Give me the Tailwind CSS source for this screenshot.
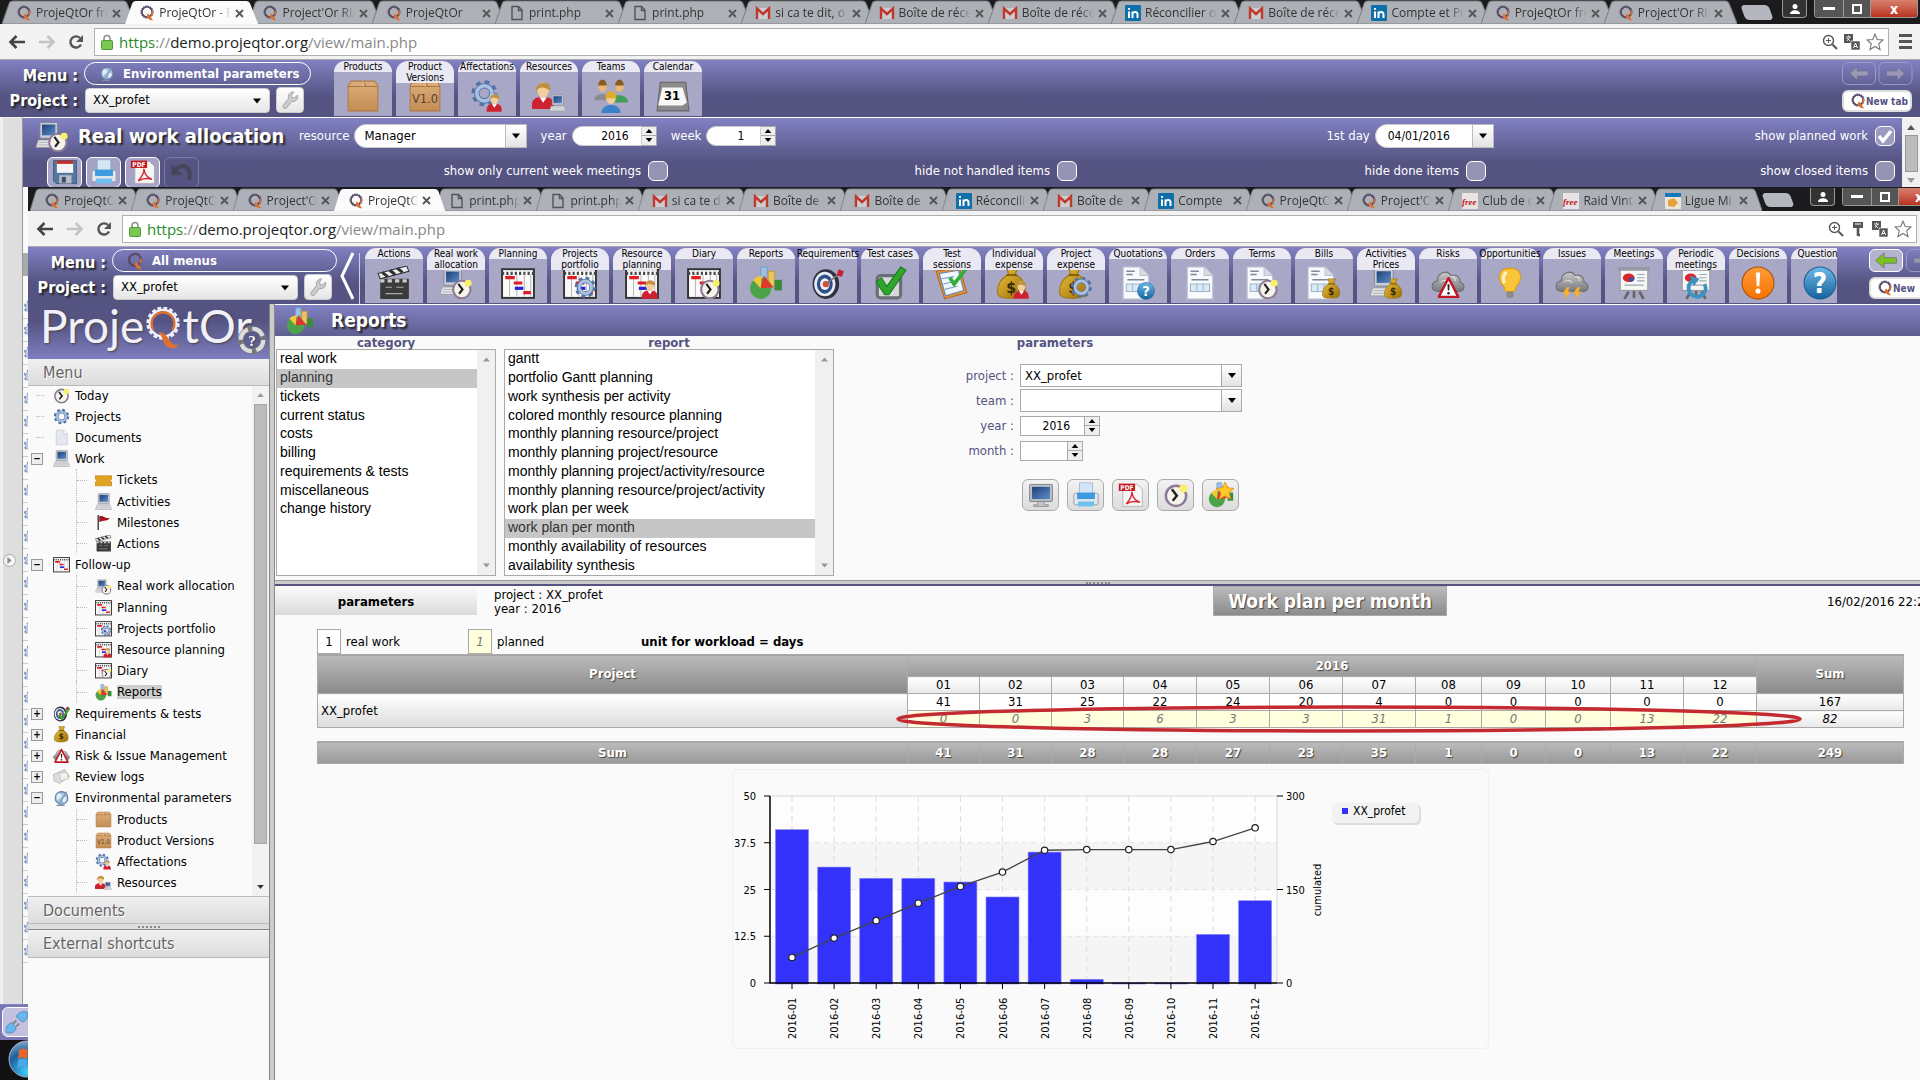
<!DOCTYPE html>
<html lang="en">
<head>
<meta charset="utf-8">
<title>ProjeQtOr - Reports</title>
<script src="https://cdn.jsdelivr.net/npm/@tailwindcss/browser@4"></script>
</head>
<body class="bg-[#fafafa] text-black text-[13px] font-['DejaVu_Sans_Condensed','DejaVu_Sans',sans-serif]">

<!-- Gradients shared by the icons -->
<svg class="absolute size-0" xmlns="http://www.w3.org/2000/svg">
  <defs>
    <linearGradient id="gBox" x1="0" y1="0" x2="0" y2="1"><stop offset="0" stop-color="#dcae7c"/><stop offset="1" stop-color="#c58d52"/></linearGradient>
    <linearGradient id="gBlue" x1="0" y1="0" x2="0" y2="1"><stop offset="0" stop-color="#6db9e6"/><stop offset="1" stop-color="#15629f"/></linearGradient>
    <linearGradient id="gOrange" x1="0" y1="0" x2="0" y2="1"><stop offset="0" stop-color="#ff9c3a"/><stop offset="1" stop-color="#f57200"/></linearGradient>
    <linearGradient id="gScreen" x1="0" y1="0" x2="1" y2="1"><stop offset="0" stop-color="#1d4078"/><stop offset="1" stop-color="#5d8cc8"/></linearGradient>
    <linearGradient id="gCloud" x1="0" y1="0" x2="0" y2="1"><stop offset="0" stop-color="#c9c9cb"/><stop offset="1" stop-color="#77787c"/></linearGradient>
    <linearGradient id="gGold" x1="0" y1="0" x2="1" y2="1"><stop offset="0" stop-color="#ecc23e"/><stop offset="1" stop-color="#9c6f08"/></linearGradient>
    <radialGradient id="gOrb" cx=".5" cy=".85" r=".9"><stop offset="0" stop-color="#3fd0f5"/><stop offset=".6" stop-color="#1a5f9c"/><stop offset="1" stop-color="#8fb4cc"/></radialGradient>
  </defs>
</svg>
<!-- Icon library -->
<svg class="hidden" xmlns="http://www.w3.org/2000/svg">
  <symbol id="q" viewBox="0 0 16 16"><circle cx="8" cy="7" r="5.4" fill="none" stroke="#4d4668" stroke-width="2.2" stroke-dasharray="1.5 .6"/><circle cx="8" cy="7" r="5" fill="none" stroke="#5b4a5e" stroke-width="1.2"/><path d="M8.500 9l4 5.500c-2.500 0-3-1.500-4.500-4M12.700 10a5.800 5.800 0 0 0 .4-4" fill="none" stroke="#e0702c" stroke-width="1.600"/></symbol>
  <symbol id="page" viewBox="0 0 16 16"><path d="M3 1.500h6.500l3.500 3.500v9.500h-10zM9.500 1.500v4h3.500" fill="none" stroke="#505458" stroke-width="1.400"/></symbol>
  <symbol id="gmail" viewBox="0 0 16 16"><path d="M1 3h14v11H1z" fill="#dfe0e2" opacity=".6"/><path d="M2 14V3.500l6 5.500 6-5.500V14" fill="none" stroke="#c0372c" stroke-width="2.400"/></symbol>
  <symbol id="in" viewBox="0 0 16 16"><rect width="16" height="16" rx="1" fill="#0f6fa8"/><path d="M4 6.500V13M4 3v1.800M7.500 13V6.500M7.500 9c.5-2.500 5-2.800 5 .5V13" stroke="#fff" stroke-width="2" fill="none"/></symbol>
  <symbol id="free" viewBox="0 0 16 16"><rect width="16" height="16" fill="#e8e4e4"/><text x="0" y="12" font-size="9" font-weight="bold" font-style="italic" font-family="Liberation Serif" fill="#c51414">free</text></symbol>
  <symbol id="ligue" viewBox="0 0 16 16"><rect width="16" height="16" fill="#ece6d8"/><rect width="16" height="4" fill="#1779b8"/><path d="M3 7l6-2 4 5-4 4-6-1z" fill="#e2a23c"/></symbol>
  <symbol id="lock" viewBox="0 0 12 16"><path d="M3 7V4.500a3 3 0 0 1 6 0V7" fill="none" stroke="#8b9488" stroke-width="1.600"/><rect x=".5" y="6.500" width="11" height="9" rx="1" fill="#7cc653" stroke="#4d9a35"/></symbol>
  <symbol id="back" viewBox="0 0 18 16"><path d="M17 8H3M8.500 2L2.500 8l6 6" fill="none" stroke="currentColor" stroke-width="2.600"/></symbol>
  <symbol id="reload" viewBox="0 0 16 16"><path d="M13 10.500A5.600 5.600 0 1 1 12 4" fill="none" stroke="#555" stroke-width="2.400"/><path d="M15 1v7H8z" fill="#555"/></symbol>
  <symbol id="zoom" viewBox="0 0 16 16"><circle cx="6.500" cy="6.500" r="5" fill="none" stroke="#555" stroke-width="1.400"/><path d="M4 6.500h5M6.500 4v5" stroke="#555"/><path d="M10.500 10.500L15 15" stroke="#555" stroke-width="2"/></symbol>
  <symbol id="key" viewBox="0 0 16 16"><path d="M3 1h10v6H3z" fill="#555"/><path d="M5 3h6" stroke="#fff"/><path d="M8 7v8M8 14h2" stroke="#555" stroke-width="2.600"/></symbol>
  <symbol id="trans" viewBox="0 0 16 16"><rect width="9" height="9" fill="#555"/><rect x="7" y="7" width="9" height="9" fill="#555" stroke="#fff" stroke-width=".6"/><path d="M2 3h5M4.500 1.500V3M3 7l3-4M3 4l3 3" stroke="#fff" stroke-width=".8" fill="none"/><path d="M9.500 14l2-5 2 5M10.200 12.500h2.600" stroke="#fff" fill="none"/></symbol>
  <symbol id="star0" viewBox="0 0 18 18"><path d="M9 1.200l2.300 5.300 5.700.5-4.300 3.800 1.300 5.700L9 13.500l-5 3 1.300-5.700L1 7l5.700-.5z" fill="#fff" stroke="#777" stroke-width="1.100"/></symbol>
  <symbol id="wrench" viewBox="0 0 20 22"><path d="M14 3a5 5 0 0 0-5.500 6.500L3.500 16a2 2 0 0 0 3 3l5-6.500A5 5 0 0 0 17.500 6l-3 3-2.500-.5-.5-2.500z" fill="#ccc" stroke="#a5a5a5"/></symbol>
  <symbol id="globe" viewBox="0 0 32 32"><circle cx="16" cy="15" r="12" fill="#9fc0de" stroke="#5d83ab" stroke-width="2"/><path d="M9 7c5-2 9 1 7 5s-5 3-7 8c-3-3-3-9 0-13zM20 14c4-2 6 1 5 5s-4 5-6 3 0-6 1-8z" fill="#e6edf2"/><path d="M26 3L10 29M6 29h16" stroke="#7d92a8" stroke-width="2"/></symbol>
  <symbol id="box" viewBox="0 0 32 32"><path d="M2 6l3-4h22l3 4v24H2z" fill="url(#gBox)" stroke="#b17a43"/><path d="M2 7h28M16 2l3 5" stroke="#a97540" fill="none"/><path d="M16 2v5" stroke="#e6c49c"/></symbol>
  <symbol id="boxv" viewBox="0 0 32 32"><use href="#box"/><text x="16" y="23" text-anchor="middle" font-size="12" font-family="DejaVu Sans Condensed" fill="#56442e">V1.0</text></symbol>
  <symbol id="gear" viewBox="0 0 32 32"><circle cx="16" cy="16" r="12" fill="none" stroke="#5574a6" stroke-width="5" stroke-dasharray="5 4.420"/><circle cx="16" cy="16" r="8.500" fill="none" stroke="#5574a6" stroke-width="6"/><circle cx="16" cy="16" r="8.500" fill="none" stroke="#a9c0e0" stroke-width="4"/></symbol>
  <symbol id="person" viewBox="0 0 32 32"><path d="M3 31c-1-9 4-13 9-13h7c6 0 10 4 9 13z" fill="#cf2230"/><path d="M12 18l4 6 4-6z" fill="#fff"/><ellipse cx="16" cy="10" rx="6.500" ry="8.500" fill="#f2cf9a"/><path d="M8 12C6 0 26-2 24 10c-3-1-7-3-9-3-3 0-5 1-7 5z" fill="#c09040"/></symbol>
  <symbol id="comp" viewBox="0 0 32 32"><rect x="6" y="1" width="21" height="19" rx="1" fill="#c9cdd6" stroke="#80848c"/><rect x="8.500" y="3.500" width="16" height="13" fill="url(#gScreen)"/><path d="M4 22h24l3 9H1z" fill="#e6e6e8" stroke="#90939a"/><path d="M5 25h22M4 28h24" stroke="#a5a8ae"/></symbol>
  <symbol id="clock" viewBox="0 0 32 32"><circle cx="16" cy="17" r="12.500" fill="#f7f3ea" stroke="#8c7b98" stroke-width="3"/><path d="M11 9l6 8-5 6" fill="none" stroke="#222" stroke-width="3"/><circle cx="25" cy="8" r="5" fill="#f8ef6a"/></symbol>
  <symbol id="gantt" viewBox="0 0 32 32"><rect x="1" y="3" width="30" height="27" fill="#fafafa" stroke="#333" stroke-width="1.800"/><path d="M1 7h30" stroke="#444" stroke-width="3" stroke-dasharray="2 2"/><path d="M8 8v21M15 8v21M22 8v21M28 8v21" stroke="#bbb"/><path d="M4 11h9M12 16h8M21 25h7" stroke="#e01b24" stroke-width="3"/><path d="M13 21h8" stroke="#2323d8" stroke-width="3"/></symbol>
  <symbol id="clapper" viewBox="0 0 32 32"><path d="M1 7L28 0l2 5L3 12z" fill="#eee" stroke="#333"/><path d="M5 6l5 4M12 4l5 4M19 2l5 4" stroke="#333" stroke-width="3"/><rect x="3" y="12" width="27" height="19" rx="1" fill="#3b3b3b"/><path d="M3 14h27" stroke="#ccc" stroke-width="3" stroke-dasharray="4 3"/><path d="M8 20h6M18 20h7M8 26h16" stroke="#aaa"/></symbol>
  <symbol id="report" viewBox="0 0 32 32"><path d="M11 1h6v14h-6z" fill="#9cc0e8" stroke="#7a9ec8"/><path d="M18 5h6v14h-6z" fill="#e8c560" stroke="#c79c30"/><path d="M24 13h7v10h-7z" fill="#3c8b3c"/><circle cx="11" cy="21" r="10" fill="#4da34a"/><path d="M11 21L4 13.500a10 10 0 0 1 8-4z" fill="#f6c838"/><path d="M11 21l3-12 9 11z" fill="#e0372c"/></symbol>
  <symbol id="target" viewBox="0 0 32 32"><ellipse cx="14" cy="17" rx="12.500" ry="14" fill="#2d3140"/><ellipse cx="13" cy="17" rx="10" ry="11.500" fill="#e8ecf2"/><ellipse cx="13" cy="17" rx="7.500" ry="9" fill="#2f4f8c"/><ellipse cx="13" cy="17" rx="4.500" ry="5.500" fill="#f1f3f8"/><circle cx="14" cy="17" r="3" fill="#e04a2a"/><path d="M14 17L27 7" stroke="#777" stroke-width="1.500"/><path d="M24 9l2-6 5 2-2 5z" fill="#c8202c"/></symbol>
  <symbol id="check" viewBox="0 0 32 32"><rect x="4" y="9" width="22" height="21" rx="3" fill="#d8d8da" stroke="#6a6f75" stroke-width="3"/><path d="M3 15l5-4 5 8L26 1l5 3-16 23h-4z" fill="#2fa52c" stroke="#177a18"/></symbol>
  <symbol id="clip" viewBox="0 0 32 32"><path d="M1 5l22-4 7 24-21 6z" fill="#e0913a" stroke="#b56a20"/><path d="M4 7l18-3 5 19-17 5z" fill="#f0f6fb" stroke="#5a87b5"/><path d="M6 12l12-2M8 17l12-3M9 22l12-3" stroke="#7aa3cf"/><path d="M14 11l4 6L29 3" fill="none" stroke="#2fae3a" stroke-width="3.500"/></symbol>
  <symbol id="bag" viewBox="0 0 32 32"><path d="M11 1h11l-3 7c7 3 11 10 9 18-1 5-22 6-25 1C1 19 6 11 13 8z" fill="url(#gGold)" stroke="#9c7410"/><path d="M11 8.500h10" stroke="#8a5f00" stroke-width="2"/><text x="15.500" y="25" text-anchor="middle" font-size="15" font-weight="bold" font-family="DejaVu Sans Condensed" fill="#3b2a00">$</text></symbol>
  <symbol id="doc" viewBox="0 0 32 32"><path d="M4 1h16l8 8v22H4z" fill="#f7f9fc" stroke="#b9c3d0"/><path d="M20 1v8h8" fill="#d4dce6" stroke="#b9c3d0"/><path d="M7 5h8M7 8h6M8 13h16" stroke="#7f8a98" stroke-width="1.500"/><path d="M7 17h18v7H7zM13 17v7M19 17v7" fill="#dbe9f6" stroke="#9db6d0"/></symbol>
  <symbol id="quest" viewBox="0 0 32 32"><circle cx="16" cy="16" r="15" fill="url(#gBlue)" stroke="#1c5e96"/><text x="16" y="25" text-anchor="middle" font-size="26" font-weight="bold" font-family="DejaVu Sans Condensed" fill="#fff">?</text></symbol>
  <symbol id="excl" viewBox="0 0 32 32"><circle cx="16" cy="16" r="15" fill="url(#gOrange)" stroke="#a85206"/><path d="M14 6h4l-.8 13h-2.400z" fill="#fff"/><circle cx="16" cy="23.500" r="2.400" fill="#fff"/></symbol>
  <symbol id="cloud" viewBox="0 0 32 32"><path d="M6 24c-7-1-6-9 0-10 0-8 9-11 13-5 6-2 9 3 8 6 6 2 5 9-1 9z" fill="url(#gCloud)" stroke="#6d6e72"/><path d="M9 15c2-2 6-2 7 1M19 10c3 0 4 2 4 4" fill="none" stroke="#e1e1e3"/></symbol>
  <symbol id="warn" viewBox="0 0 32 32"><path d="M16 2l14 27H2z" fill="#fff" stroke="#c01824" stroke-width="3.500" stroke-linejoin="round"/><path d="M14.500 11h3l-.5 9h-2z" fill="#222"/><circle cx="16" cy="24" r="1.800" fill="#222"/></symbol>
  <symbol id="bulb" viewBox="0 0 32 32"><path d="M16 2c12 0 12 11 6 17-1 2-1 4-2 5h-8c-1-1-1-3-2-5C4 13 4 2 16 2z" fill="#fbc53a" stroke="#e09a1a"/><path d="M13 6c-4 2-4 7-2 10" fill="none" stroke="#fff3c4" stroke-width="3"/><rect x="12.500" y="24" width="7" height="6" rx="2" fill="#8a8a8a"/></symbol>
  <symbol id="storm" viewBox="0 0 32 32"><use href="#cloud"/><path d="M11 20l-4 6h3l-2 6 7-8h-3l2-4zM21 20l-4 6h3l-2 6 7-8h-3l2-4z" fill="#fbb02a"/></symbol>
  <symbol id="board" viewBox="0 0 32 32"><path d="M11 24l-4 7M21 24l4 7M16 23v7" stroke="#666" stroke-width="2.500"/><rect x="3" y="3" width="26" height="20" fill="#f6f6f8" stroke="#999"/><rect x="1" y="1" width="30" height="3.500" fill="#9a9aa2"/><ellipse cx="11" cy="11" rx="5.500" ry="4" fill="#d8262c"/><path d="M11 11l5.500 0c0 3-2 4-4 4z" fill="#3152b0"/><path d="M19 8h7M19 11h7M19 14h7M7 18h18" stroke="#9aa"/></symbol>
  <symbol id="periodic" viewBox="0 0 32 32"><use href="#board"/><path d="M24 17a8 8 0 1 1-6-4" fill="none" stroke="#3a94c2" stroke-width="3.500"/><path d="M10 9l9 3-5 7z" fill="#3a94c2"/></symbol>
  <symbol id="flag" viewBox="0 0 32 32"><path d="M6 2v28" stroke="#333" stroke-width="2.500"/><path d="M8 4c8-2 11 5 20 4-3 5-12 4-20 7z" fill="#a01420"/></symbol>
  <symbol id="ticket" viewBox="0 0 32 32"><path d="M0 7h32v6a3 3 0 0 0 0 6v7H0v-7a3 3 0 0 0 0-6z" fill="#e2a321" stroke="#b47a10"/></symbol>
  <symbol id="mail" viewBox="0 0 32 32"><path d="M1 12L22 3l9 13-18 13-11-5z" fill="#ddddda" stroke="#999"/><path d="M12 10l14-2 3 12-14 4z" fill="#f2f2ef" stroke="#aaa"/></symbol>
  <symbol id="sheet" viewBox="0 0 32 32"><path d="M6 2h14l7 7v21H6z" fill="#e4e6f0" stroke="#bcc0d0"/><path d="M20 2v7h7" fill="#f8f8fc" stroke="#bcc0d0"/></symbol>
  <symbol id="cal" viewBox="0 0 32 32"><path d="M4 3h24l3 27H1z" fill="#8b8b8b" stroke="#666"/><path d="M6 8h19l4 14-4 3H2z" fill="#f7f7f7"/><text x="15" y="20" text-anchor="middle" font-size="12" font-weight="bold" font-family="DejaVu Sans Condensed">31</text></symbol>
  <symbol id="team" viewBox="0 0 32 32"><path d="M0 20c0-8 16-8 16 0z" fill="#8c8c90"/><path d="M15 22c0-9 17-9 17 0z" fill="#3f9e5a"/><ellipse cx="8" cy="7" rx="4" ry="5" fill="#e8b878"/><ellipse cx="24" cy="7" rx="4" ry="5" fill="#e8b878"/><path d="M4 6c0-7 8-7 8 0zM20 6c0-7 8-7 8 0z" fill="#8a5a24"/><path d="M7 32c0-10 18-10 18 0z" fill="#3a82c8"/><ellipse cx="16" cy="18" rx="4.500" ry="5.500" fill="#f2cf9a"/><path d="M11 18c-1-9 11-9 10 0z" fill="#e0ac30"/></symbol>
  <symbol id="affect" viewBox="0 0 32 32"><use href="#gear" width="27" height="27"/><use href="#person" x="14" y="13" width="18" height="19"/></symbol>
  <symbol id="resource" viewBox="0 0 32 32"><use href="#person" x="-3" y="0" width="27" height="31"/><use href="#comp" x="16" y="14" width="16" height="17"/></symbol>
  <symbol id="rwa" viewBox="0 0 32 32"><use href="#comp" width="25" height="30"/><use href="#clock" x="11" y="11" width="21" height="21"/></symbol>
  <symbol id="portfolio" viewBox="0 0 32 32"><use href="#gantt"/><use href="#gear" x="10" y="9" width="22" height="22"/></symbol>
  <symbol id="resplan" viewBox="0 0 32 32"><use href="#gantt"/><use href="#person" x="14" y="12" width="19" height="20"/></symbol>
  <symbol id="diary" viewBox="0 0 32 32"><use href="#gantt"/><use href="#clock" x="11" y="11" width="21" height="21"/></symbol>
  <symbol id="indexp" viewBox="0 0 32 32"><use href="#bag" x="-2"/><use href="#person" x="14" y="13" width="18" height="19"/></symbol>
  <symbol id="projexp" viewBox="0 0 32 32"><use href="#bag" x="-2"/><use href="#gear" x="10" y="9" width="22" height="22"/></symbol>
  <symbol id="quot" viewBox="0 0 32 32"><use href="#doc" x="-2"/><use href="#quest" x="15" y="15" width="17" height="17"/></symbol>
  <symbol id="terms" viewBox="0 0 32 32"><use href="#doc" x="-2"/><use href="#clock" x="11" y="11" width="21" height="21"/></symbol>
  <symbol id="bills" viewBox="0 0 32 32"><use href="#doc" x="-3"/><use href="#bag" x="13" y="11" width="20" height="21"/></symbol>
  <symbol id="actprice" viewBox="0 0 32 32"><use href="#comp" width="27" height="31"/><use href="#bag" x="13" y="11" width="20" height="21"/></symbol>
  <symbol id="risk" viewBox="0 0 32 32"><use href="#cloud"/><use href="#warn" x="6" y="10" width="21" height="21"/></symbol>
  <symbol id="riskm" viewBox="0 0 32 32"><use href="#cloud"/><use href="#warn" x="2" y="2" width="28" height="30"/></symbol>
  <symbol id="reqtest" viewBox="0 0 32 32"><use href="#target"/><path d="M11 18l6 8L31 6" fill="none" stroke="#3f9e2c" stroke-width="4"/></symbol>
  <symbol id="floppy" viewBox="0 0 32 32"><path d="M2 2h28v28H5l-3-3z" fill="#54779f" stroke="#35506f"/><rect x="6" y="3" width="20" height="14" fill="#f4f4f4"/><rect x="6" y="2" width="20" height="4" fill="#c82a2a"/><rect x="9" y="20" width="15" height="10" fill="#b9bec6"/><rect x="12" y="22" width="5" height="7" fill="#3c4f68"/></symbol>
  <symbol id="printer" viewBox="0 0 32 32"><path d="M8 1h16v14H8z" fill="#d4e6f6" stroke="#9ab8d4"/><rect x="1" y="14" width="30" height="14" rx="2" fill="#e3e6ea" stroke="#8e959e"/><rect x="5" y="13" width="22" height="8" fill="#3f9be0"/><path d="M6 24h20v6H6z" fill="#6fc0ee"/></symbol>
  <symbol id="pdf" viewBox="0 0 32 32"><path d="M6 3h18l6 6v21H6z" fill="#f6f6f6" stroke="#aaa"/><rect x="1" y="2" width="20" height="9" fill="#c4161c"/><text x="11" y="9.500" text-anchor="middle" font-size="8" font-weight="bold" fill="#fff" font-family="DejaVu Sans Condensed">PDF</text><path d="M10 27c5-5 8-12 7-15 1 7 4 11 10 13-6-2-12-1-17 2z" fill="none" stroke="#d8262c" stroke-width="1.800"/></symbol>
  <symbol id="undo" viewBox="0 0 32 32"><path d="M8 14C15 4 28 8 25 25" fill="none" stroke="#46465a" stroke-width="5"/><path d="M3 6v14h14z" fill="#46465a"/></symbol>
  <symbol id="monitor" viewBox="0 0 32 32"><rect x="2" y="3" width="28" height="21" rx="1" fill="#b9bfc9" stroke="#6e747e"/><rect x="5" y="6" width="22" height="15" fill="url(#gScreen)"/><path d="M12 24h8v4h5v2H7v-2h5z" fill="#c4c8ce" stroke="#888"/></symbol>
  <symbol id="repstar" viewBox="0 0 32 32"><use href="#report"/><path d="M21 0l3 7 8 1-6 5 2 8-7-4-7 4 2-8-6-5 8-1z" fill="#ffc929" stroke="#e88a10"/></symbol>
  <symbol id="arrow" viewBox="0 0 24 18"><path d="M1 9l9-8v5h13v6H10v5z" fill="currentColor" stroke="#6c6c84" stroke-width=".8"/></symbol>
  <symbol id="plug" viewBox="0 0 32 32"><path d="M2 30c-2-8 2-12 8-13l5 8c-3 5-7 7-13 5z" fill="#6ab7ee" stroke="#3c7fb8"/><path d="M15 9C17 3 24 1 30 3c1 6-1 12-7 13z" fill="#6ab7ee" stroke="#3c7fb8"/><path d="M11 18l4-4M15 22l4-4" stroke="#888" stroke-width="3"/></symbol>
  <symbol id="caret" viewBox="0 0 10 6"><path d="M0 0h10L5 6z" fill="currentColor"/></symbol>
  <symbol id="buoy" viewBox="0 0 32 32"><circle cx="16" cy="16" r="12" fill="#54538188" stroke="#777" stroke-width="6"/><circle cx="16" cy="16" r="12" fill="none" stroke="#dcdcdc" stroke-width="4.500" stroke-dasharray="14 4.850"/><text x="16" y="22" text-anchor="middle" font-size="16" font-family="Liberation Serif" font-weight="bold" fill="#fff">?</text></symbol>
  <symbol id="qlogo" viewBox="0 0 40 46"><circle cx="20" cy="18" r="16" fill="none" stroke="#f0effa" stroke-width="3" stroke-dasharray="4 2.280"/><circle cx="20" cy="18" r="14" fill="none" stroke="#f0effa" stroke-width="2.500"/><path d="M10 25a12 12 0 1 1 20 0" fill="none" stroke="#e0702c" stroke-width="2.500"/><path d="M15 27c6 1 9 4 12 9 2 4 6 6 10 4-3 6-12 5-15 0-2-4-3-8-7-13z" fill="#e0702c"/></symbol>
</svg>

<main class="relative min-h-screen overflow-hidden bg-[#fafafa]">

  <!-- Rear browser window -->
  <section class="flex min-h-screen flex-col">
    <div class="flex h-6 bg-[#1b1b1d] pl-[2px] shrink-0">
      <div id="tabsA" class="flex w-[1725px] shrink-0"></div>
      <div class="mt-[5px] ml-4 h-[15px] w-7 skew-x-[20deg] rounded-sm bg-[#b4b8be]"></div>
      <div class="ml-auto mr-[2px] flex gap-[7px]">
        <button aria-label="User" class="flex h-[18px] w-[25px] items-center justify-center rounded-b border border-t-0 border-[#999] bg-[#333]"><svg class="size-3" viewBox="0 0 12 12"><circle cx="6" cy="3.500" r="2.500" fill="#fff"/><path d="M1 11c0-5 10-5 10 0z" fill="#fff"/></svg></button>
        <div class="flex h-[18px] overflow-hidden rounded-b border border-t-0 border-[#999]">
          <button aria-label="Minimize" class="flex w-7 items-center justify-center bg-[#555]"><span class="h-[3px] w-3 bg-white"></span></button>
          <button aria-label="Restore" class="flex w-7 items-center justify-center border-x border-[#999] bg-[#555]"><span class="size-[10px] border-2 border-white"></span></button>
          <button aria-label="Close" class="w-[46px] bg-linear-to-b from-[#d8806e] to-[#b8301c] text-sm leading-4 font-bold text-white">x</button>
        </div>
      </div>
    </div>
    <div class="flex h-9 shrink-0 items-center border-b border-[#aaa] bg-[#f2f2f2] pl-2 pr-2">
      <button aria-label="Back"><svg class="h-4 w-[18px] text-[#444]"><use href="#back"/></svg></button>
      <button aria-label="Forward" class="ml-3 -scale-x-100"><svg class="h-4 w-[18px] text-[#c4c4c4]"><use href="#back"/></svg></button>
      <button aria-label="Reload" class="ml-3"><svg class="size-4"><use href="#reload"/></svg></button>
      <div class="ml-[10px] flex h-7 flex-1 items-center border border-[#b0b0b0] bg-white pl-[6px] pr-1">
        <svg class="mr-[6px] h-4 w-3"><use href="#lock"/></svg>
        <a href="#" class="flex-1 font-['Open_Sans',sans-serif] text-[15px] leading-6 text-[#888]"><span class="text-[#2a8a2a]">https</span>://<span class="text-[#222]">demo.projeqtor.org</span>/view/main.php</a>
        <svg class="mr-[6px] size-4"><use href="#zoom"/></svg><svg class="mr-[6px] size-4"><use href="#trans"/></svg><svg class="size-[18px]"><use href="#star0"/></svg>
      </div>
      <button aria-label="Menu" class="ml-[10px] flex w-[13px] flex-col gap-[3px]"><span class="h-[3px] bg-[#555]"></span><span class="h-[3px] bg-[#555]"></span><span class="h-[3px] bg-[#555]"></span></button>
    </div>

    <header class="flex h-[57px] shrink-0 bg-linear-to-b from-[#8281c3] to-[#545381] to-65%">
      <div class="w-[78px] pt-[5px] text-right text-base font-bold text-white [text-shadow:2px_2px_2px_#222]"><p class="leading-[22px]">Menu :</p><p class="mt-px leading-[26px]">Project :</p></div>
      <div class="ml-[6px] w-[228px] pt-[2px]">
        <button class="flex h-[23px] w-[227px] items-center rounded-full border border-white pl-[14px] text-[13px] font-bold text-white"><svg class="mr-2 size-4"><use href="#globe"/></svg>Environmental parameters</button>
        <div class="mt-[2px] flex items-center">
          <label class="relative ml-px block"><select aria-label="Project" class="h-[25px] w-[185px] appearance-none rounded-sm border border-[#ccc] bg-linear-to-b from-white to-[#e6e6e6] pl-[7px] text-[13px]"><option>XX_profet</option></select><svg class="pointer-events-none absolute right-[9px] top-[10px] h-[6px] w-2"><use href="#caret"/></svg></label>
          <button aria-label="Configure" class="ml-[6px] flex h-[26px] w-7 items-center justify-center rounded-sm border border-[#ccc] bg-linear-to-b from-white to-[#e6e6e6]"><svg class="h-[22px] w-5"><use href="#wrench"/></svg></button>
        </div>
      </div>
      <nav id="tilesA" class="ml-[22px] flex gap-[4px]"></nav>
      <div class="mr-2 ml-auto w-[70px] pt-[2px]">
        <div class="flex gap-[3px]">
          <button aria-label="Previous" class="flex h-[23px] w-[34px] items-center justify-center rounded-md border border-[#9a99c4]"><svg class="h-[15px] w-6 text-[#9a98b4]"><use href="#arrow"/></svg></button>
          <button aria-label="Next" class="flex h-[23px] w-[34px] -scale-x-100 items-center justify-center rounded-md border border-[#9a99c4]"><svg class="h-[15px] w-6 text-[#9a98b4]"><use href="#arrow"/></svg></button>
        </div>
        <button class="mt-[5px] flex h-[22px] w-[70px] items-center rounded-md border-2 border-[#ddd] bg-white pl-[6px] text-[10px] font-bold whitespace-nowrap text-[#545381]"><svg class="size-4 shrink-0"><use href="#q"/></svg>New tab</button>
      </div>
    </header>

    <div class="flex flex-1">
      <aside class="relative flex w-[23px] shrink-0 border-t border-[#eee] flex-col bg-[#dedede] border-r border-r-[#999] border-l-[3px] border-l-[#f0f0f0]">
        <button aria-label="Expand" class="absolute top-[436px] left-0 flex size-[13px] items-center justify-center rounded-full border border-[#aaa] bg-[#f6f6f6]"><svg class="h-[5px] w-[7px] -rotate-90 text-[#888]"><use href="#caret"/></svg></button>
      </aside>
      <div class="flex-1">
        <form class="flex h-[70px] border-t border-white">
          <div class="flex-1 bg-linear-to-b from-[#8281c3] to-[#545381] to-65% text-white">
            <div class="flex h-[35px] items-center pl-3 pr-[7px]">
              <svg class="size-[34px]"><use href="#rwa"/></svg>
              <h1 class="ml-[9px] w-[221px] text-xl font-bold whitespace-nowrap [text-shadow:2px_2px_2px_#222]">Real work allocation</h1>
              <label class="relative flex items-center gap-1"><span>resource</span><select class="h-6 w-[173px] appearance-none rounded-l-full border border-[#ccc] bg-white pl-[10px] text-[13px] text-black"><option>Manager</option></select><span class="pointer-events-none absolute right-0 flex h-6 w-[22px] items-center justify-center border border-[#bbb] bg-linear-to-b from-white to-[#e3e3e3] text-black"><svg class="h-[6px] w-2"><use href="#caret"/></svg></span></label>
              <label class="ml-[14px] flex items-center gap-[5px]"><span>year</span><span data-spin class="flex"><input value="2016" class="h-5 w-[70px] rounded-l-full border border-[#ccc] bg-white pr-3 text-right text-xs text-black"></span></label>
              <label class="ml-[14px] flex items-center gap-[5px]"><span>week</span><span data-spin class="flex"><input value="1" class="h-5 w-[55px] rounded-l-full border border-[#ccc] bg-white pr-4 text-right text-xs text-black"></span></label>
              <label class="relative mr-[261px] ml-auto flex items-center gap-[5px]"><span>1st day</span><input value="04/01/2016" class="h-6 w-[119px] rounded-l-full border border-[#ccc] bg-white pl-3 text-xs text-black"><span class="absolute right-0 flex h-6 w-[22px] items-center justify-center border border-[#bbb] bg-linear-to-b from-white to-[#e3e3e3] text-black"><svg class="h-[6px] w-2"><use href="#caret"/></svg></span></label>
              <label class="relative flex items-center gap-[7px]"><span>show planned work</span><input type="checkbox" checked class="size-5 appearance-none rounded-md border border-white bg-[#9c9abf]"><svg class="pointer-events-none absolute right-[1px] size-[18px]" viewBox="0 0 18 18"><path d="M3 9l4 5 8-10" fill="none" stroke="#fff" stroke-width="3.500"/></svg></label>
            </div>
            <div class="flex h-[34px] items-center pr-[7px]">
              <div id="toolsA" class="ml-6 flex gap-1 pt-1"></div>
              <div class="grid flex-1 grid-cols-[469px_1fr_1fr_1fr] justify-items-end pt-[2px]">
                <label class="flex items-center gap-[7px]">show only current week meetings<input type="checkbox" class="size-5 appearance-none rounded-md border border-white bg-[#9793b4]"></label>
                <label class="flex items-center gap-[7px]">hide not handled items<input type="checkbox" class="size-5 appearance-none rounded-md border border-white bg-[#9793b4]"></label>
                <label class="flex items-center gap-[7px]">hide done items<input type="checkbox" class="size-5 appearance-none rounded-md border border-white bg-[#9793b4]"></label>
                <label class="flex items-center gap-[7px]">show closed items<input type="checkbox" class="size-5 appearance-none rounded-md border border-white bg-[#9793b4]"></label>
              </div>
            </div>
          </div>
          <div class="flex w-[18px] flex-col items-center bg-[#f1f1f1]"><svg class="mt-[7px] h-[5px] w-2 rotate-180 text-[#555]"><use href="#caret"/></svg><div class="mt-[5px] h-[37px] w-[13px] border border-[#999] bg-[#bcbcbc]"></div><svg class="mt-[6px] h-[5px] w-2 text-[#999]"><use href="#caret"/></svg></div>
        </form>
        <div class="mt-[66px] h-[23px] w-[5px] bg-[#aaa]"></div>
        <div id="sliver" class="mt-[20px] w-[5px] overflow-hidden"></div>
      </div>
    </div>
    <div class="h-9 shrink-0 border-t border-[#8281c3] bg-[#7877b4] p-[2px]"><button aria-label="Connect" class="flex h-[30px] w-[60px] items-center rounded-md border border-white bg-[#c3c1de] pl-[2px]"><svg class="size-6"><use href="#plug"/></svg></button></div>
    <div class="h-10 shrink-0 bg-[#111] pl-2"><svg class="h-[38px] w-[38px]" viewBox="0 0 38 38"><circle cx="19" cy="19" r="18" fill="url(#gOrb)" stroke="#aac"/><path d="M11 10c3-2 6-2 9 0l-1 9c-3-2-6-2-9 0z" fill="#e8662c"/><path d="M10 20c3-2 6-2 9 0l-1 8c-3-2-6-2-9 0z" fill="#4ea6e6"/><path d="M21 11c3 1 6 1 8 0v9c-3 1-6 1-9-1z" fill="#8cc63f"/></svg></div>
  </section>

  <!-- Front browser window -->
  <section class="absolute inset-y-0 right-0 left-7 top-[187px] flex flex-col overflow-hidden bg-[#fafafa]">
    <div class="flex h-6 shrink-0 bg-[#1b1b1d] pt-px pl-[2px]">
      <div id="tabsB" class="flex w-[1722px] shrink-0"></div>
      <div class="mt-[5px] ml-3 h-[14px] w-7 shrink-0 skew-x-[20deg] rounded-sm bg-[#b4b8be]"></div>
      <div class="-mr-10 ml-auto flex shrink-0 gap-[7px]">
        <button aria-label="User" class="flex h-[18px] w-[25px] items-center justify-center rounded-b border border-t-0 border-[#999] bg-[#333]"><svg class="size-3" viewBox="0 0 12 12"><circle cx="6" cy="3.500" r="2.500" fill="#fff"/><path d="M1 11c0-5 10-5 10 0z" fill="#fff"/></svg></button>
        <div class="flex h-[18px] overflow-hidden rounded-b border border-t-0 border-[#999]">
          <button aria-label="Minimize" class="flex w-7 items-center justify-center bg-[#555]"><span class="h-[3px] w-3 bg-white"></span></button>
          <button aria-label="Restore" class="flex w-7 items-center justify-center border-x border-[#999] bg-[#555]"><span class="size-[10px] border-2 border-white"></span></button>
          <button aria-label="Close" class="w-[60px] bg-linear-to-b from-[#d8806e] to-[#b8301c] pl-4 text-left text-sm leading-4 font-bold text-white">x</button>
        </div>
      </div>
    </div>
    <div class="flex h-9 shrink-0 items-center border-b border-[#aaa] bg-[#f2f2f2] pl-2 pr-[3px]">
      <button aria-label="Back"><svg class="h-4 w-[18px] text-[#444]"><use href="#back"/></svg></button>
      <button aria-label="Forward" class="ml-3 -scale-x-100"><svg class="h-4 w-[18px] text-[#c4c4c4]"><use href="#back"/></svg></button>
      <button aria-label="Reload" class="ml-3"><svg class="size-4"><use href="#reload"/></svg></button>
      <div class="ml-[10px] flex h-7 flex-1 items-center border border-[#b0b0b0] bg-white pl-[6px] pr-1">
        <svg class="mr-[6px] h-4 w-3"><use href="#lock"/></svg>
        <a href="#" class="flex-1 font-['Open_Sans',sans-serif] text-[15px] leading-6 text-[#888]"><span class="text-[#2a8a2a]">https</span>://<span class="text-[#222]">demo.projeqtor.org</span>/view/main.php</a>
        <svg class="mr-[6px] size-4"><use href="#zoom"/></svg><svg class="mr-[6px] size-4"><use href="#key"/></svg><svg class="mr-[6px] size-4"><use href="#trans"/></svg><svg class="size-[18px]"><use href="#star0"/></svg>
      </div>
    </div>

    <header class="flex h-[57px] shrink-0 bg-linear-to-b from-[#8281c3] to-[#545381] to-65%">
      <div class="w-[78px] shrink-0 pt-[5px] text-right text-base font-bold text-white [text-shadow:2px_2px_2px_#222]"><p class="leading-[22px]">Menu :</p><p class="mt-px leading-[26px]">Project :</p></div>
      <div class="ml-[6px] w-[227px] shrink-0 pt-[2px]">
        <button class="flex h-[23px] w-[225px] items-center rounded-full border border-white pl-[13px] text-[13px] font-bold text-white"><svg class="mr-2 size-[18px]"><use href="#q"/></svg>All menus</button>
        <div class="mt-[2px] flex items-center">
          <label class="relative ml-px block"><select aria-label="Project" class="h-[25px] w-[185px] appearance-none rounded-sm border border-[#ccc] bg-linear-to-b from-white to-[#e6e6e6] pl-[7px] text-[13px]"><option>XX_profet</option></select><svg class="pointer-events-none absolute right-[9px] top-[10px] h-[6px] w-2"><use href="#caret"/></svg></label>
          <button aria-label="Configure" class="ml-[6px] flex h-[26px] w-7 items-center justify-center rounded-sm border border-[#ccc] bg-linear-to-b from-white to-[#e6e6e6]"><svg class="h-[22px] w-5"><use href="#wrench"/></svg></button>
        </div>
      </div>
      <button aria-label="Scroll left" class="w-4 shrink-0"><svg class="h-[50px] w-4" viewBox="0 0 16 50"><path d="M14 2L3 25l11 23" fill="none" stroke="#fff" stroke-width="3"/></svg></button>
      <div class="mt-[6px] mr-[5px] ml-1 w-px shrink-0 bg-[#d0cfe8]"></div>
      <nav id="tilesB" class="flex flex-1 gap-[4px] overflow-hidden"></nav>
      <div class="ml-8 w-[51px] shrink-0 overflow-hidden pt-[2px]">
        <div class="flex gap-[3px]">
          <button aria-label="Previous" class="flex h-[23px] w-[34px] shrink-0 items-center justify-center rounded-md border border-white bg-[#b5b4d0]"><svg class="h-[17px] w-6 text-[#79c31c]"><use href="#arrow"/></svg></button>
          <button aria-label="Next" class="flex h-[23px] w-[34px] shrink-0 -scale-x-100 items-center justify-center rounded-md border border-[#9a99c4]"><svg class="h-[15px] w-6 text-[#9a98b4]"><use href="#arrow"/></svg></button>
        </div>
        <button class="mt-[5px] flex h-[22px] w-[70px] items-center rounded-md border-2 border-[#ddd] bg-white pl-[6px] text-[10px] font-bold whitespace-nowrap text-[#545381]"><svg class="size-4 shrink-0"><use href="#q"/></svg>New</button>
      </div>
    </header>

    <div class="flex min-h-0 flex-1">
      <!-- Sidebar -->
      <aside class="flex w-[241px] shrink-0 flex-col">
        <div class="relative flex h-[55px] items-start bg-linear-to-b from-[#545381] from-30% to-[#7f7ec0] pl-3 text-[#f0effa] [text-shadow:1px_1px_2px_#444]">
          <span class="font-[Lato,sans-serif] text-[46px] leading-[44px]">Proje</span><svg class="mt-px h-[46px] w-[38px]"><use href="#qlogo"/></svg><span class="font-[Lato,sans-serif] text-[46px] leading-[44px]">tOr</span>
          <svg class="absolute right-[2px] bottom-[4px] size-[30px]"><use href="#buoy"/></svg>
        </div>
        <h2 class="h-[27px] border-b border-[#bbb] bg-linear-to-b from-[#f0f0f2] to-[#dcdcdc] pl-[15px] text-base leading-[28px] text-[#656565] [text-shadow:1px_1px_#fff]">Menu</h2>
        <div class="flex h-[510px] overflow-hidden">
          <ul id="tree" class="-mt-px min-w-0 flex-1"></ul>
          <div class="flex w-[17px] flex-col items-center bg-[#f2f2f2]"><svg class="mt-[7px] h-[4px] w-[7px] rotate-180 text-[#999]"><use href="#caret"/></svg><div class="mt-[7px] h-[440px] w-[13px] border border-[#a5a5a5] bg-[#bcbcbc]"></div><svg class="mt-auto mb-[7px] h-[4px] w-[7px] text-[#333]"><use href="#caret"/></svg></div>
        </div>
        <h2 class="h-[28px] border-y border-[#bbb] bg-linear-to-b from-[#f0f0f2] to-[#dcdcdc] pl-[15px] text-base leading-[28px] text-[#656565] [text-shadow:1px_1px_#fff]">Documents</h2>
        <div class="flex h-[6px] items-center justify-center border-b border-[#888] bg-[#ddd]"><div class="w-[22px] border-t-2 border-dotted border-[#888]"></div></div>
        <h2 class="h-[28px] border-b border-[#bbb] bg-linear-to-b from-[#f0f0f2] to-[#dcdcdc] pl-[15px] text-base leading-[28px] text-[#656565] [text-shadow:1px_1px_#fff]">External shortcuts</h2>
      </aside>
      <div class="flex w-[6px] shrink-0 items-center border-x border-x-[#888] bg-[#ccc]"></div>

      <!-- Report pane -->
      <div class="flex min-w-0 flex-1 flex-col">
        <div class="flex h-8 shrink-0 items-center border-t border-white bg-linear-to-b from-[#8281c3] to-[#5f5e90] pl-[11px]">
          <svg class="size-7"><use href="#report"/></svg><h1 class="ml-[17px] text-[19px] font-bold text-white [text-shadow:2px_2px_2px_#222]">Reports</h1>
        </div>
        <form class="flex h-[244px] shrink-0 pl-px">
          <div class="w-[220px]">
            <label for="cat" class="block h-[13px] text-center leading-[13px] font-bold text-[#545381]">category</label>
            <div class="flex h-[227px] border border-[#aaa] bg-white">
              <select id="cat" size="12" class="h-[225px] flex-1 overflow-hidden font-['Liberation_Sans',Arial,sans-serif] text-sm leading-[18px]">
              </select>
              <div class="flex w-[18px] flex-col items-center justify-between bg-[#f0f0f0] py-[7px] text-[#999]"><svg class="h-[5px] w-[7px] rotate-180"><use href="#caret"/></svg><svg class="h-[5px] w-[7px]"><use href="#caret"/></svg></div>
            </div>
          </div>
          <div class="ml-2 w-[330px]">
            <label for="rep" class="block h-[13px] text-center leading-[13px] font-bold text-[#545381]">report</label>
            <div class="flex h-[227px] border border-[#aaa] bg-white">
              <select id="rep" size="12" class="h-[225px] flex-1 overflow-hidden font-['Liberation_Sans',Arial,sans-serif] text-sm leading-[18px]">
              </select>
              <div class="flex w-[18px] flex-col items-center justify-between bg-[#f0f0f0] py-[7px] text-[#999]"><svg class="h-[5px] w-[7px] rotate-180"><use href="#caret"/></svg><svg class="h-[5px] w-[7px]"><use href="#caret"/></svg></div>
            </div>
          </div>
          <div class="w-[442px]">
            <h3 class="h-[28px] text-center leading-[13px] font-bold text-[#545381]">parameters</h3>
            <div class="grid grid-cols-[180px_1fr] items-center gap-x-[6px] gap-y-[2px] text-[#545381]">
              <label for="pp" class="text-right leading-[23px]">project :</label>
              <span class="relative flex"><select id="pp" class="h-[23px] w-[222px] appearance-none border border-[#aaa] bg-white pl-1 text-black"><option>XX_profet</option></select><span class="pointer-events-none absolute left-[201px] flex h-[23px] w-[21px] items-center justify-center border border-[#aaa] bg-linear-to-b from-white to-[#e3e3e3] text-black"><svg class="h-[5px] w-2"><use href="#caret"/></svg></span></span>
              <label for="pt" class="text-right leading-[23px]">team :</label>
              <span class="relative flex"><select id="pt" class="h-[23px] w-[222px] appearance-none border border-[#aaa] bg-white pl-1 text-black"><option></option></select><span class="pointer-events-none absolute left-[201px] flex h-[23px] w-[21px] items-center justify-center border border-[#aaa] bg-linear-to-b from-white to-[#e3e3e3] text-black"><svg class="h-[5px] w-2"><use href="#caret"/></svg></span></span>
              <label for="py" class="text-right leading-[23px]">year :</label>
              <span data-spin class="flex"><input id="py" value="2016" class="h-5 w-[65px] border border-[#aaa] bg-white pr-[14px] text-right text-xs text-black"></span>
              <label for="pm" class="text-right leading-[23px]">month :</label>
              <span data-spin class="flex"><input id="pm" class="h-5 w-[48px] border border-[#aaa] bg-white text-black"></span>
            </div>
            <div id="toolsB" class="mt-[17px] ml-[188px] flex gap-2"></div>
          </div>
        </form>
        <div class="flex h-[6px] shrink-0 items-center justify-center border-t border-b-2 border-t-[#999] border-b-[#545381] bg-[#ccc]"><div class="w-6 border-t-2 border-dotted border-[#888]"></div></div>

        <div class="flex h-[43px] shrink-0 items-start">
          <h3 class="mt-px h-[28px] w-[202px] bg-linear-to-b from-[#fafafa] to-[#dadada] text-center leading-[30px] font-bold">parameters</h3>
          <p class="ml-[17px] pt-[2px] leading-[14px]">project : XX_profet<br>year : 2016</p>
          <h2 class="mr-[380px] ml-auto h-[30px] w-[234px] border border-[#aaa] bg-linear-to-b from-[#bbb] to-[#8c8c8c] text-center text-[19px] leading-7 font-bold text-white [text-shadow:1px_1px_1px_#444]">Work plan per month</h2>
          <time class="w-[93px] overflow-hidden leading-[31px] whitespace-nowrap">16/02/2016 22:2</time>
        </div>
        <div class="mr-4 ml-[42px]">
          <div class="flex h-[25px] items-center">
            <span class="h-[25px] w-6 border border-[#aaa] bg-white text-center leading-6">1</span><span class="ml-[5px] w-[122px]">real work</span>
            <span class="h-[25px] w-6 border border-[#aaa] bg-[#ffffdd] text-center leading-6 text-[#777] italic">1</span><span class="ml-[5px] w-[144px]">planned</span>
            <strong>unit for workload = days</strong>
          </div>
          <div class="relative">
            <table id="plan" class="w-full table-fixed border-collapse text-center"></table>
            <!-- red marker drawn over the planned values -->
            <svg class="pointer-events-none absolute top-[51px] right-[100px] h-7 w-[910px]" viewBox="0 0 910 28" preserveAspectRatio="none"><ellipse cx="455" cy="14" rx="451" ry="12" fill="none" stroke="#c32b31" stroke-width="3.500"/></svg>
          </div>
          <figure class="mx-auto mt-[5px] h-[280px] w-[757px] rounded-md border border-[#f0f0f0]">
            <svg id="chart" class="h-[278px] w-[755px] font-['DejaVu_Sans_Condensed','DejaVu_Sans',sans-serif]" viewBox="0 0 755 278"></svg>
          </figure>
        </div>
      </div>
    </div>
  </section>
</main>

<script>
const el = id => document.getElementById(id);

// Browser tabs: [icon, title, active]
const tab = ([ic, t, on]) => `
  <a href="#" class="relative flex min-w-0 flex-1 items-center pl-[14px] pt-[2px] pr-[2px] ${on ? 'z-10' : ''}">
    <svg class="absolute inset-y-0 left-0 h-full w-[calc(100%+10px)]" viewBox="0 0 133 24" preserveAspectRatio="none"><path d="M0 24L7 4Q8 1 11 1H121Q124 1 125 4L133 24z" fill="${on ? '#fbfbfb' : '#adb1b7'}" stroke="#7d8186" stroke-width="${on ? 0 : 1}"/></svg>
    <svg class="relative size-4 shrink-0"><use href="#${ic}"/></svg>
    <span class="relative ml-1 min-w-0 flex-1 overflow-hidden font-['Open_Sans',sans-serif] text-xs leading-5 whitespace-nowrap text-[#333] mask-r-from-80%">${t}</span>
    <svg class="relative mr-[2px] ml-1 size-[9px] shrink-0" viewBox="0 0 9 9"><path d="M1 1l7 7M8 1L1 8" stroke="#555" stroke-width="1.800"/></svg>
  </a>`;
el('tabsA').innerHTML = [['q','ProjeQtOr fre'],['q','ProjeQtOr - P',1],["q","Project'Or RIA"],['q','ProjeQtOr'],['page','print.php'],['page','print.php'],['gmail','si ca te dit, o'],['gmail','Boîte de réce'],['gmail','Boîte de réce'],['in','Réconcilier o'],['gmail','Boîte de réce'],['in','Compte et Pr'],['q','ProjeQtOr fre'],["q","Project'Or RIA"]].map(tab).join('');
el('tabsB').innerHTML = [['q','ProjeQtO'],['q','ProjeQtO'],["q","Project'O"],['q','ProjeQtO',1],['page','print.php'],['page','print.php'],['gmail','si ca te d'],['gmail','Boîte de'],['gmail','Boîte de'],['in','Réconcili'],['gmail','Boîte de'],['in','Compte'],['q','ProjeQtO'],["q","Project'O"],['free','Club de c'],['free','Raid Vint'],['ligue','Ligue Mi']].map(tab).join('');

// Shortcut tiles
const tile = ([ic, t]) => `
  <a href="#" class="relative mt-px h-[55px] w-[58px] shrink-0 rounded-t-xl bg-[#a9a7c6]">
    <svg class="absolute bottom-[3px] left-[12px] size-[34px]"><use href="#${ic}"/></svg>
    <span class="relative flex justify-center rounded-t-xl bg-[#e9e8f3] text-center text-[10px] leading-[11px] whitespace-nowrap">${t}</span>
  </a>`;
el('tilesA').innerHTML = [['box','Products'],['boxv','Product<br>Versions'],['affect','Affectations'],['resource','Resources'],['team','Teams'],['cal','Calendar']].map(tile).join('');
el('tilesB').innerHTML = [['clapper','Actions'],['rwa','Real work<br>allocation'],['gantt','Planning'],['portfolio','Projects<br>portfolio'],['resplan','Resource<br>planning'],['diary','Diary'],['report','Reports'],['target','Requirements'],['check','Test cases'],['clip','Test<br>sessions'],['indexp','Individual<br>expense'],['projexp','Project<br>expense'],['quot','Quotations'],['doc','Orders'],['terms','Terms'],['bills','Bills'],['actprice','Activities<br>Prices'],['risk','Risks'],['bulb','Opportunities'],['storm','Issues'],['board','Meetings'],['periodic','Periodic<br>meetings'],['excl','Decisions'],['quest','Questions']].map(tile).join('');

// Spinner arrows
document.querySelectorAll('[data-spin]').forEach(s => s.insertAdjacentHTML('beforeend', `
  <span class="flex h-5 w-[15px] flex-col border border-l-0 border-[#aaa] bg-[#eee] text-black">
    <button type="button" aria-label="Increase" class="flex flex-1 items-center justify-center border-b border-[#aaa]"><svg class="h-[4px] w-2 rotate-180"><use href="#caret"/></svg></button>
    <button type="button" aria-label="Decrease" class="flex flex-1 items-center justify-center"><svg class="h-[4px] w-2"><use href="#caret"/></svg></button>
  </span>`));

el('toolsA').innerHTML = ['floppy','printer','pdf','undo'].map((i, n) => `<button type="button" aria-label="${i}" class="${n == 3 ? 'flex h-[31px] w-[35px] items-center justify-center rounded-md border border-[#7a79a0]' : 'flex h-[31px] w-[35px] items-center justify-center rounded-md border border-white bg-[#a5a3c6]'}"><svg class="size-[26px]"><use href="#${i}"/></svg></button>`).join('');
el('toolsB').innerHTML = ['monitor','printer','pdf','clock','repstar'].map(i => `<button type="button" aria-label="${i}" class="flex h-8 w-[37px] items-center justify-center rounded-md border border-[#aaa] bg-linear-to-b from-[#f2f2f2] to-[#dcdcdc]"><svg class="size-[26px]"><use href="#${i}"/></svg></button>`).join('');

// List boxes
const fill = (id, list, sel) => el(id).innerHTML = list.map(t => `<option ${t == sel ? 'selected' : ''} class="h-[19px] min-h-0 p-0 pl-[3px] leading-[18px] nth-[4n]:h-[18px] checked:bg-[#c6c6c6] checked:bg-linear-to-b checked:from-[#c6c6c6] checked:to-[#c6c6c6] checked:text-[#333]">${t}</option>`).join('');
fill('cat', ['real work','planning','tickets','current status','costs','billing','requirements &amp; tests','miscellaneous','change history'], 'planning');
fill('rep', ['gantt','portfolio Gantt planning','work synthesis per activity','colored monthly resource planning','monthly planning resource/project','monthly planning project/resource','monthly planning project/activity/resource','monthly planning resource/project/activity','work plan per week','work plan per month','monthly availability of resources','availability synthesis'], 'work plan per month');

// Menu tree: [depth, icon, label, expander]
el('tree').innerHTML = [[0,'clock','Today',''],[0,'gear','Projects',''],[0,'sheet','Documents',''],[0,'comp','Work','−'],[1,'ticket','Tickets'],[1,'comp','Activities'],[1,'flag','Milestones'],[1,'clapper','Actions'],[0,'gantt','Follow-up','−'],[1,'rwa','Real work allocation'],[1,'gantt','Planning'],[1,'portfolio','Projects portfolio'],[1,'resplan','Resource planning'],[1,'diary','Diary'],[1,'report','Reports'],[0,'reqtest','Requirements &amp; tests','+'],[0,'bag','Financial','+'],[0,'riskm','Risk &amp; Issue Management','+'],[0,'mail','Review logs','+'],[0,'globe','Environmental parameters','−'],[1,'box','Products'],[1,'boxv','Product Versions'],[1,'affect','Affectations'],[1,'resource','Resources']].map(([d, ic, t, x]) => d
  ? `<li class="flex h-[21px] items-center pl-[48px] nth-[5n]:h-[22px]"><span class="h-full border-l border-dotted border-[#bbb]"></span><span class="mr-2 w-[10px] border-t border-dotted border-[#bbb]"></span><svg class="size-[17px]"><use href="#${ic}"/></svg><a href="#" class="${t == 'Reports' ? 'ml-[5px] bg-[#cfcfcf] leading-[14px]' : 'ml-[5px] leading-[14px]'}">${t}</a></li>`
  : `<li class="flex h-[21px] items-center pl-[3px] nth-[5n]:h-[22px]">${x ? `<button aria-label="Toggle" class="mr-[10px] flex size-3 items-center justify-center border border-[#999] bg-[#eee] text-[10px] leading-none font-bold">${x}</button>` : '<span class="mr-[9px] ml-[5px] w-[8px] border-t border-dotted border-[#bbb]"></span>'}<svg class="size-[17px]"><use href="#${ic}"/></svg><a href="#" class="ml-[5px] leading-[14px] whitespace-nowrap">${t}</a></li>`).join('');

// Edge of the hidden list in the rear window
el('sliver').innerHTML = Array.from({length: 29}, () => `<div class="flex h-[23px] items-center border-b border-[#ccc]"><svg class="size-4 shrink-0 opacity-70"><use href="#gear"/></svg></div>`).join('');

// Work plan table
const real = [41,31,25,22,24,20,4,0,0,0,0,0], plan = [0,0,3,6,3,3,31,1,0,0,13,22];
const tot = real.map((v, i) => v + plan[i]);
const cw = [72,72,72,73,73,73,73,66,64,65,73,73];
const each = (a, c) => a.map(v => `<td class="${c}">${v}</td>`).join('');
el('plan').innerHTML = `<colgroup><col>${cw.map(w => `<col style="width:${w}px">`).join('')}<col style="width:147px"></colgroup>
  <tr><th rowspan="2" class="border border-[#aaa] bg-linear-to-b from-[#bbb] to-[#8a8a8a] text-white [text-shadow:1px_1px_1px_#444]">Project</th><th colspan="12" class="h-[22px] border border-[#aaa] bg-linear-to-b from-[#bbb] to-[#999] p-0 text-white [text-shadow:1px_1px_1px_#444]">2016</th><th rowspan="2" class="border border-[#aaa] bg-linear-to-b from-[#bbb] to-[#8a8a8a] text-white [text-shadow:1px_1px_1px_#444]">Sum</th></tr>
  <tr>${each(cw.map((_, i) => String(i + 1).padStart(2, '0')), 'h-[17px] border border-[#aaa] bg-linear-to-b from-white to-[#e8e8e8] p-0 leading-[14px]')}</tr>
  <tr><td rowspan="2" class="border border-[#aaa] bg-linear-to-b from-white to-[#dcdcdc] p-0 pl-[3px] text-left">XX_profet</td>${each(real, 'h-[17px] border border-[#aaa] bg-white p-0 leading-[14px]')}<td class="border border-[#aaa] bg-linear-to-b from-white to-[#e8e8e8] p-0 leading-[14px]">167</td></tr>
  <tr>${each(plan, 'h-[17px] border border-[#aaa] bg-[#ffffdd] p-0 leading-[14px] text-[#777] italic')}<td class="border border-[#aaa] bg-linear-to-b from-white to-[#e8e8e8] p-0 leading-[14px] italic">82</td></tr>
  <tr><td colspan="14" class="h-[14px] p-0"></td></tr>
  <tr class="font-bold text-white [text-shadow:1px_1px_1px_#444]">${each(['Sum', ...tot, 249], 'h-[22px] border border-[#aaa] bg-linear-to-b from-[#bbb] to-[#999] p-0')}</tr>`;

// Chart
const L = 37, R = 544, T = 26, B = 213, X = i => 59 + 42.1 * i;
let s = `<rect x="${L}" y="${T}" width="${R - L}" height="${B - T}" fill="#fdfdfd"/>`;
[[.25, .5], [.75, 1]].forEach(([a, b]) => s += `<rect x="${L}" y="${T + a * 187}" width="${R - L}" height="${(b - a) * 187}" fill="#f5f5f5"/>`);
[.25, .5, .75].forEach(a => s += `<path d="M${L} ${T + a * 187}H${R}" stroke="#e4e4e4" stroke-dasharray="5 4"/>`);
tot.forEach((_, i) => s += `<path d="M${X(i)} ${T}V${B}" stroke="#ddd" stroke-dasharray="6 4"/>`);
s += `<path d="M${L} ${T}H${R}V${B}" fill="none" stroke="#d8d8d8"/>`;
tot.forEach((v, i) => s += `<rect x="${X(i) - 16.5}" y="${B - v * 3.74}" width="33" height="${v * 3.74 + 1}" fill="#3232fa" stroke="#8888f0" stroke-width=".6"/>`);
s += `<path d="M${L} ${T}V${B}H${R}" fill="none" stroke="#000" stroke-width="1.500"/>`;
[50, 37.5, 25, 12.5, 0].forEach((v, i) => s += `<path d="M31 ${T + i * 46.75}H${L}" stroke="#000"/><text x="23" y="${T + i * 46.75 + 4}" text-anchor="end" font-size="11">${v}</text>`);
[300, 150, 0].forEach((v, i) => s += `<path d="M${R} ${T + i * 93.5}h6" stroke="#000"/><text x="553" y="${T + i * 93.5 + 4}" font-size="11">${v}</text>`);
let c = 0; const pts = tot.map((v, i) => [X(i), B - (c += v) * .6233]);
s += `<polyline points="${pts.join(' ')}" fill="none" stroke="#444" stroke-width="1.300"/>`;
pts.forEach(([x, y], i) => s += `<circle cx="${x}" cy="${y}" r="3.200" fill="#fff" stroke="#222" stroke-width="1.200"/><path d="M${x} ${B}v6" stroke="#000"/><text transform="translate(${x + 4} 269) rotate(-90)" font-size="11">2016-${String(i + 1).padStart(2, '0')}</text>`);
s += `<text transform="translate(588 120) rotate(-90)" text-anchor="middle" font-size="11">cumulated</text>
  <rect x="600" y="34" width="88" height="21" rx="5" fill="#ddd"/><rect x="599" y="33" width="87" height="20" rx="5" fill="#f2f2f2"/><rect x="609" y="38" width="6" height="6" fill="#3232fa"/><text x="620" y="45" font-size="12">XX_profet</text>`;
el('chart').innerHTML = s;
</script>
</body>
</html>
